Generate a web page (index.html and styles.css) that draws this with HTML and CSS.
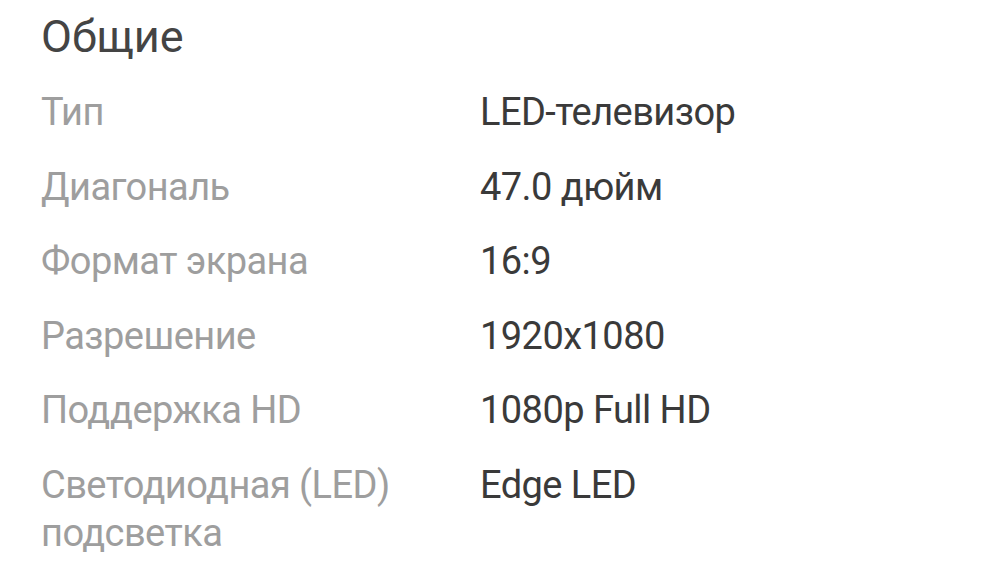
FILE: index.html
```html
<!DOCTYPE html>
<html lang="ru">
<head>
<meta charset="utf-8">
<link rel="stylesheet" href="styles.css">
</head>
<body>
<section class="specs">
  <h2 class="specs-title">Общие</h2>
  <dl class="spec-list">
    <div class="spec-row"><dt>Тип</dt><dd>LED-телевизор</dd></div>
    <div class="spec-row"><dt>Диагональ</dt><dd>47.0 дюйм</dd></div>
    <div class="spec-row"><dt>Формат экрана</dt><dd>16:9</dd></div>
    <div class="spec-row"><dt>Разрешение</dt><dd>1920x1080</dd></div>
    <div class="spec-row"><dt>Поддержка HD</dt><dd>1080p Full HD</dd></div>
    <div class="spec-row"><dt>Светодиодная (LED) подсветка</dt><dd>Edge LED</dd></div>
  </dl>
</section>
</body>
</html>
```
FILE: styles.css
```css
html, body {
  margin: 0;
  padding: 0;
  background: #ffffff;
}
body {
  font-family: Roboto, "Noto Sans", sans-serif;
  overflow: hidden;
}
.specs {
  padding: 9px 0 0 41px;
}
.specs-title {
  margin: 0;
  font-size: 45px;
  font-weight: 400;
  line-height: 56px;
  color: #444444;
}
.spec-list {
  margin: 23px 0 0 0;
  display: flex;
  flex-direction: column;
  gap: 26.5px;
}
.spec-row {
  display: grid;
  grid-template-columns: 439px 1fr;
  font-size: 38px;
  letter-spacing: -0.55px;
  line-height: 48px;
}
.spec-row dt {
  color: #9e9e9e;
  padding-right: 40px;
}
.spec-row dd {
  margin: 0;
  color: #3a3a3a;
}
```
